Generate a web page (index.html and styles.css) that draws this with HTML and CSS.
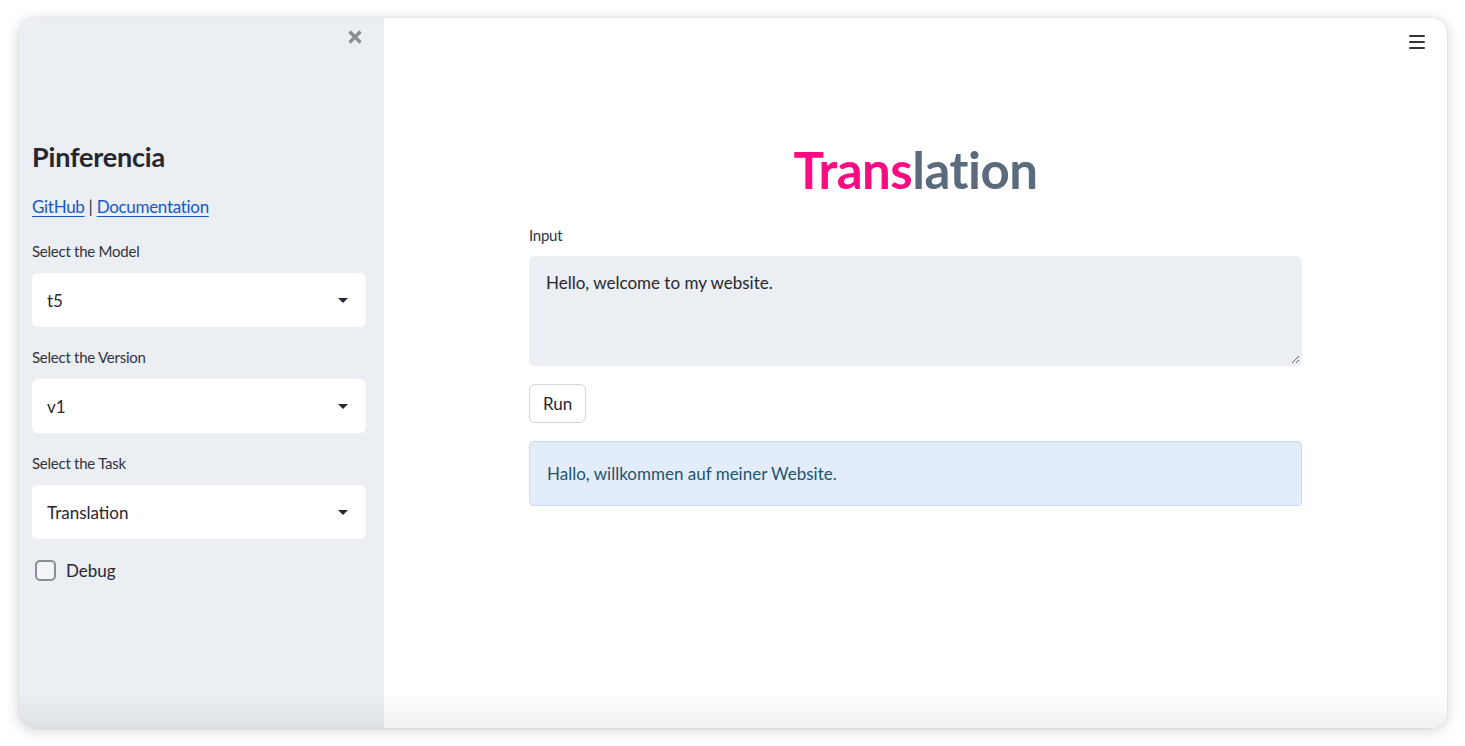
FILE: index.html
```html
<!DOCTYPE html>
<html lang="en">
<head>
<meta charset="utf-8">
<title>Pinferencia - Translation</title>
<link rel="stylesheet" href="styles.css">
</head>
<body>
<div class="window">
  <aside class="sidebar">
    <div class="sidebar-top">
      <svg class="close" width="16" height="16" viewBox="0 0 16 16"><path d="M2.5 2.5 L13.5 13.5 M13.5 2.5 L2.5 13.5" stroke="#8a8c94" stroke-width="3.2" stroke-linecap="butt"/></svg>
    </div>
    <h2 class="brand">Pinferencia</h2>
    <p class="links"><a href="#">GitHub</a> | <a href="#">Documentation</a></p>
    <div class="field">
      <label class="label">Select the Model</label>
      <div class="select"><span>t5</span><span class="caret"></span></div>
    </div>
    <div class="field">
      <label class="label">Select the Version</label>
      <div class="select"><span>v1</span><span class="caret"></span></div>
    </div>
    <div class="field">
      <label class="label">Select the Task</label>
      <div class="select"><span>Translation</span><span class="caret"></span></div>
    </div>
    <div class="check"><span class="box"></span><span>Debug</span></div>
  </aside>
  <main class="main">
    <div class="menu"><span></span><span></span><span></span></div>
    <div class="content">
      <h1 class="title"><span class="pink">Trans</span><span class="slate">lation</span></h1>
      <label class="label">Input</label>
      <div class="textarea">Hello, welcome to my website.
        <svg class="grip" width="9" height="9" viewBox="0 0 9 9"><path d="M1 8 L8 1 M5 8 L8 5" stroke="#666" stroke-width="1"/></svg>
      </div>
      <button class="run">Run</button>
      <div class="alert">Hallo, willkommen auf meiner Website.</div>
    </div>
  </main>
  <div class="bottom-shade"></div>
</div>
</body>
</html>
```

FILE: styles.css
```css
* { box-sizing: border-box; }
html, body { margin: 0; padding: 0; background: #fff; }
body {
  font-family: Lato, "Noto Sans", sans-serif;
  color: #31333f;
  width: 1465px;
  height: 746px;
  overflow: hidden;
}
.window {
  position: relative;
  margin: 18px 0 0 19px;
  width: 1428px;
  height: 710px;
  border-radius: 16px;
  overflow: hidden;
  display: flex;
  box-shadow: 0 2px 14px rgba(0,0,0,0.18), 0 0 3px rgba(0,0,0,0.08);
}
.sidebar {
  width: 365px;
  flex: none;
  background: #ebeef3;
  padding: 0 18px 0 13px;
  display: flex;
  flex-direction: column;
}
.sidebar-top {
  height: 112px;
  display: flex;
  justify-content: flex-end;
  padding: 11px 3px 0 0;
}
.close { display: block; }
.brand {
  margin: 0;
  font-size: 27px;
  font-weight: 700;
  line-height: 54px;
  color: #262730;
  letter-spacing: -0.2px;
}
.links {
  margin: 0 0 10px;
  font-size: 17px;
  line-height: 46px;
  letter-spacing: -0.3px;
  color: #31333f;
}
.links a { color: #1758c8; text-decoration: underline; text-underline-offset: 3px; }
.field { margin-bottom: 19px; }
.label {
  display: block;
  font-size: 15px;
  line-height: 22px;
  margin-bottom: 11px;
  letter-spacing: -0.25px;
  color: #31333f;
}
.select {
  height: 54px;
  background: #fff;
  border-radius: 6px;
  display: flex;
  align-items: center;
  justify-content: space-between;
  padding: 0 18px 0 15px;
  font-size: 17px;
  color: #262730;
}
.caret {
  width: 0; height: 0;
  border-left: 5px solid transparent;
  border-right: 5px solid transparent;
  border-top: 5px solid #262730;
}
.check {
  display: flex;
  align-items: center;
  gap: 10px;
  margin-top: 2px;
  padding-left: 3px;
  font-size: 17px;
  color: #262730;
}
.box {
  width: 21px; height: 21px;
  border: 2px solid #8b8d94;
  border-radius: 5px;
  background: #f3f4f7;
}
.main {
  flex: 1;
  background: #fff;
  position: relative;
  display: flex;
  justify-content: center;
}
.menu {
  position: absolute;
  top: 16px;
  right: 22px;
  width: 16px;
  display: flex;
  flex-direction: column;
  gap: 4px;
  padding-top: 1px;
}
.menu span { display: block; height: 2px; background: #31333f; border-radius: 1px; }
.content {
  width: 773px;
  padding-top: 120px;
  display: flex;
  flex-direction: column;
  align-items: flex-start;
}
.title {
  align-self: stretch;
  text-align: center;
  margin: 0 0 22px;
  font-size: 51px;
  line-height: 64px;
  font-weight: 700;
  letter-spacing: -0.5px;
}
.pink { color: #fe0a83; }
.slate { color: #5b6a7c; }
.content .label { margin-bottom: 10px; }
.textarea {
  position: relative;
  align-self: stretch;
  height: 110px;
  background: #ebeef3;
  border-radius: 6px;
  padding: 15px 17px;
  font-size: 17px;
  line-height: 24px;
  color: #262730;
}
.grip { position: absolute; right: 2px; bottom: 2px; }
.run {
  margin-top: 18px;
  height: 39px;
  padding: 0 13px;
  background: #fff;
  border: 1px solid #d3d4d8;
  border-radius: 6px;
  font-family: inherit;
  font-size: 17px;
  color: #262730;
}
.alert {
  align-self: stretch;
  margin-top: 18px;
  height: 65px;
  background: #e3edfa;
  border: 1px solid #c9dcf5;
  border-radius: 4px;
  padding: 0 17px;
  display: flex;
  align-items: center;
  font-size: 17px;
  color: #1f5470;
}
.bottom-shade {
  position: absolute;
  left: 0; right: 0; bottom: 0;
  height: 34px;
  background: linear-gradient(to bottom, rgba(0,0,0,0), rgba(0,0,0,0.06));
  pointer-events: none;
}
```
